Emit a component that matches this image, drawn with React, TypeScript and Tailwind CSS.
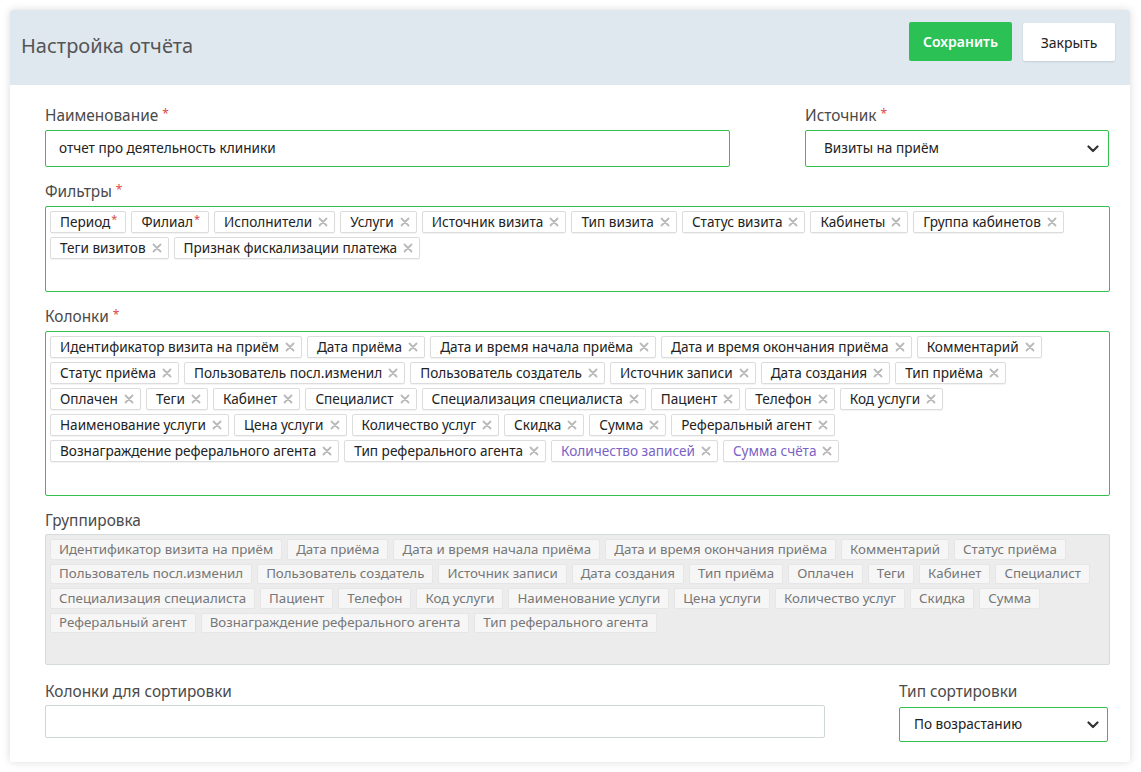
import React from "react";

const font = { fontFamily: '"Noto Sans", "Open Sans", sans-serif' };

const filters = [
  { t: "Период", req: true },
  { t: "Филиал", req: true },
  { t: "Исполнители" },
  { t: "Услуги" },
  { t: "Источник визита" },
  { t: "Тип визита" },
  { t: "Статус визита" },
  { t: "Кабинеты" },
  { t: "Группа кабинетов" },
  { t: "Теги визитов" },
  { t: "Признак фискализации платежа" },
];

const columnRows: { t: string; p?: boolean }[][] = [
  [
    { t: "Идентификатор визита на приём" },
    { t: "Дата приёма" },
    { t: "Дата и время начала приёма" },
    { t: "Дата и время окончания приёма" },
    { t: "Комментарий" },
  ],
  [
    { t: "Статус приёма" },
    { t: "Пользователь посл.изменил" },
    { t: "Пользователь создатель" },
    { t: "Источник записи" },
    { t: "Дата создания" },
    { t: "Тип приёма" },
  ],
  [
    { t: "Оплачен" },
    { t: "Теги" },
    { t: "Кабинет" },
    { t: "Специалист" },
    { t: "Специализация специалиста" },
    { t: "Пациент" },
    { t: "Телефон" },
    { t: "Код услуги" },
  ],
  [
    { t: "Наименование услуги" },
    { t: "Цена услуги" },
    { t: "Количество услуг" },
    { t: "Скидка" },
    { t: "Сумма" },
    { t: "Реферальный агент" },
  ],
  [
    { t: "Вознаграждение реферального агента" },
    { t: "Тип реферального агента" },
    { t: "Количество записей", p: true },
    { t: "Сумма счёта", p: true },
  ],
];

const groupRows: string[][] = [
  [
    "Идентификатор визита на приём",
    "Дата приёма",
    "Дата и время начала приёма",
    "Дата и время окончания приёма",
    "Комментарий",
    "Статус приёма",
  ],
  [
    "Пользователь посл.изменил",
    "Пользователь создатель",
    "Источник записи",
    "Дата создания",
    "Тип приёма",
    "Оплачен",
    "Теги",
    "Кабинет",
    "Специалист",
  ],
  [
    "Специализация специалиста",
    "Пациент",
    "Телефон",
    "Код услуги",
    "Наименование услуги",
    "Цена услуги",
    "Количество услуг",
    "Скидка",
    "Сумма",
  ],
  ["Реферальный агент", "Вознаграждение реферального агента", "Тип реферального агента"],
];

function XIcon() {
  return (
    <svg width="10" height="10" viewBox="0 0 10 10" className="ml-[6px] shrink-0">
      <path d="M1.5 1.5 L8.5 8.5 M8.5 1.5 L1.5 8.5" stroke="#b9b9b9" strokeWidth="1.8" strokeLinecap="round" />
    </svg>
  );
}

function Tag({ text, req, purple: isPurple }: { text: string; req?: boolean; purple?: boolean }) {
  return (
    <div
      className={`flex h-[22px] shrink-0 items-center whitespace-nowrap rounded-[2px] border border-[#dcdcdc] bg-white pl-[9px] text-[13.6px] leading-none shadow-[0_1px_1px_rgba(0,0,0,0.05)] ${
        req ? "pr-[8px]" : "pr-[6px]"
      } ${isPurple ? "text-[#7a62c4]" : "text-[#222]"}`}
    >
      <span>{text}</span>
      {req ? (
        <span className="relative -top-[4px] ml-[1px] text-[11px] text-[#e04848]">*</span>
      ) : (
        <XIcon />
      )}
    </div>
  );
}

function Label({ text, req }: { text: string; req?: boolean }) {
  return (
    <div className="mb-[3px] text-[15.4px] leading-[20px] text-[#4a4a4a]">
      {text}
      {req && <span className="relative -top-[3px] ml-[4px] text-[12px] text-[#e04848]">*</span>}
    </div>
  );
}

function Chevron() {
  return (
    <svg width="12" height="8" viewBox="0 0 12 8">
      <path d="M1.5 1.5 L6 6 L10.5 1.5" stroke="#333" strokeWidth="2.2" fill="none" strokeLinecap="round" strokeLinejoin="round" />
    </svg>
  );
}

export default function App() {
  return (
    <div className="min-h-[772px] w-[1141px] bg-white pt-[10px] pl-[10px]" style={font}>
      <div className="w-[1120px] rounded-[3px] bg-white shadow-[0_0_8px_rgba(0,0,0,0.15)]">
        <div className="flex h-[75px] justify-between rounded-t-[3px] bg-[#dfe8ef] pl-[11px] pr-[15px]">
          <div className="pt-[22px] text-[20px] leading-[28px] text-[#555]">Настройка отчёта</div>
          <div className="flex items-start gap-[11px] pt-[12px]">
            <button className="h-[39px] w-[103px] rounded-[2px] bg-[#2bc155] text-[14px] font-semibold text-white">
              Сохранить
            </button>
            <button className="mt-[1px] h-[38px] w-[92px] rounded-[2px] bg-white text-[14px] text-[#222] shadow-[0_1px_2px_rgba(0,0,0,0.12)]">
              Закрыть
            </button>
          </div>
        </div>

        <div className="pl-[35px] pr-[20px] pt-[21px] pb-[20px]">
          <div className="flex justify-between">
            <div className="w-[685px]">
              <Label text="Наименование" req />
              <div className="flex h-[37px] items-center rounded-[2px] border border-[#33c04f] px-[13px] text-[13.6px] text-[#222]">
                отчет про деятельность клиники
              </div>
            </div>
            <div className="mr-[1px] w-[304px]">
              <Label text="Источник" req />
              <div className="flex h-[37px] items-center justify-between rounded-[2px] border border-[#33c04f] pl-[18px] pr-[9px] text-[13.6px] text-[#222]">
                <span>Визиты на приём</span>
                <Chevron />
              </div>
            </div>
          </div>

          <div className="mt-[15px]">
            <Label text="Фильтры" req />
            <div className="flex h-[86px] flex-wrap content-start gap-x-[5px] gap-y-[4px] rounded-[2px] border border-[#33c04f] p-[4px]">
              {filters.map((f) => (
                <Tag key={f.t} text={f.t} req={f.req} />
              ))}
            </div>
          </div>

          <div className="mt-[15px]">
            <Label text="Колонки" req />
            <div className="flex h-[165px] flex-col gap-y-[4px] rounded-[2px] border border-[#33c04f] p-[4px]">
              {columnRows.map((row, i) => (
                <div key={i} className="flex gap-x-[5px]">
                  {row.map((c) => (
                    <Tag key={c.t} text={c.t} purple={c.p} />
                  ))}
                </div>
              ))}
            </div>
          </div>

          <div className="mt-[15px]">
            <Label text="Группировка" />
            <div className="flex h-[131px] flex-col gap-y-[4px] rounded-[2px] border border-[#d5dadc] bg-[#ececec] p-[4px]">
              {groupRows.map((row, i) => (
                <div key={i} className="flex gap-x-[5px]">
                  {row.map((g) => (
                    <div
                      key={g}
                      className="flex h-[20.5px] shrink-0 items-center whitespace-nowrap rounded-[2px] border border-[#e6e6e6] bg-[#f6f6f6] px-[8px] text-[13.3px] leading-none text-[#777]"
                    >
                      {g}
                    </div>
                  ))}
                </div>
              ))}
            </div>
          </div>

          <div className="mt-[17px] flex items-start justify-between">
            <div className="w-[780px]">
              <Label text="Колонки для сортировки" />
              <div className="h-[33px] rounded-[2px] border border-[#cfd6d8]" />
            </div>
            <div className="mr-[2px] w-[209px]">
              <Label text="Тип сортировки" />
              <div className="pt-[2px]">
                <div className="flex h-[35px] items-center justify-between rounded-[2px] border border-[#33c04f] pl-[14px] pr-[8px] text-[13.6px] text-[#222]">
                  <span>По возрастанию</span>
                  <Chevron />
                </div>
              </div>
            </div>
          </div>
        </div>
      </div>
    </div>
  );
}
